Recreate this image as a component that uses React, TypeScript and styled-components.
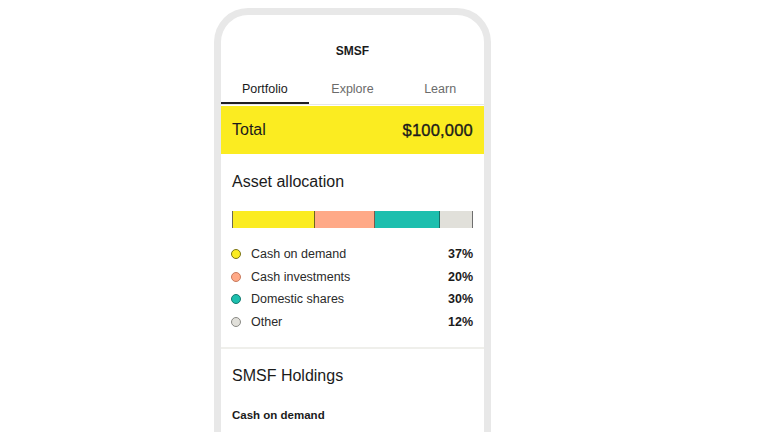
import styled, { createGlobalStyle } from 'styled-components';

const GlobalStyle = createGlobalStyle`
  html, body {
    margin: 0;
    padding: 0;
    background: #ffffff;
    font-family: "Liberation Sans", Arial, sans-serif;
    color: #1b1b1b;
    overflow: hidden;
  }
`;

const Page = styled.div`
  width: 780px;
  height: 432px;
  padding: 8px 0 0 214px;
  box-sizing: border-box;
  overflow: hidden;
`;

const Phone = styled.div`
  width: 277px;
  height: 600px;
  box-sizing: border-box;
  border: 7px solid #e8e8e8;
  border-bottom: none;
  border-radius: 34px 34px 0 0;
  background: #fff;
  display: flex;
  flex-direction: column;
`;

const Header = styled.div`
  height: 60px;
  display: flex;
  align-items: center;
  justify-content: center;
  padding-top: 12px;
  box-sizing: border-box;
  font-size: 12px;
  font-weight: 700;
`;

const Tabs = styled.div`
  display: grid;
  grid-template-columns: repeat(3, 1fr);
  border-bottom: 1px solid #e6e6e6;
`;

const Tab = styled.div<{ $active?: boolean }>`
  height: 29px;
  display: flex;
  align-items: center;
  justify-content: center;
  padding-bottom: 2px;
  box-sizing: border-box;
  font-size: 12.5px;
  color: ${(p) => (p.$active ? '#1b1b1b' : '#6b6b6b')};
  box-shadow: ${(p) => (p.$active ? 'inset 0 -2px 0 #1f1f24' : 'none')};
`;

const TotalBar = styled.div`
  height: 48px;
  background: #fbec21;
  display: flex;
  align-items: center;
  justify-content: space-between;
  padding: 0 11px;
  font-size: 16px;
  margin-top: 1px;
`;

const Amount = styled.span`
  font-size: 16.5px;
  letter-spacing: 0.2px;
  -webkit-text-stroke: 0.35px #1b1b1b;
`;

const Section = styled.div`
  padding: 0 11px;
`;

const Allocation = styled(Section)`
  border-bottom: 2px solid #efefeb;
  padding-bottom: 14px;
`;

const Title = styled.div<{ $top: number }>`
  font-size: 16px;
  padding-top: ${(p) => p.$top}px;
  height: 20px;
  line-height: 20px;
`;

const Bar = styled.div`
  display: flex;
  height: 17px;
  margin-top: 19px;
  border-left: 1px solid #6b6b55;
`;

const Segment = styled.div<{ $color: string; $edge: string }>`
  background: ${(p) => p.$color};
  border-right: 1px solid ${(p) => p.$edge};
`;

const Legend = styled.div`
  margin-top: 15px;
  display: flex;
  flex-direction: column;
`;

const Row = styled.div`
  display: flex;
  align-items: center;
  height: 22.5px;
  font-size: 12.5px;
`;

const Dot = styled.span<{ $color: string; $edge: string }>`
  width: 8px;
  height: 8px;
  border-radius: 50%;
  background: ${(p) => p.$color};
  border: 1px solid ${(p) => p.$edge};
  margin-right: 10px;
  margin-left: -1px;
`;

const Label = styled.span`
  flex: 1;
  color: #2a2a2a;
`;

const Pct = styled.span`
  font-weight: 700;
  font-size: 12.5px;
`;

const Sub = styled.div`
  font-size: 11.5px;
  font-weight: 700;
  margin-top: 23px;
`;

const assets = [
  { name: 'Cash on demand', pct: 37, width: 82, color: '#fbec21', edge: '#6b6520', dot: '#7a7418' },
  { name: 'Cash investments', pct: 20, width: 60, color: '#ffa987', edge: '#7a5a4a', dot: '#c87a5e' },
  { name: 'Domestic shares', pct: 30, width: 65, color: '#1dbfae', edge: '#1a6e66', dot: '#167a70' },
  { name: 'Other', pct: 12, width: 33, color: '#e1e0da', edge: '#6e6e6e', dot: '#8a8a86' },
];

export default function App() {
  return (
    <>
      <GlobalStyle />
      <Page>
        <Phone>
          <Header>SMSF</Header>
          <Tabs>
            <Tab $active>Portfolio</Tab>
            <Tab>Explore</Tab>
            <Tab>Learn</Tab>
          </Tabs>
          <TotalBar>
            <span>Total</span>
            <Amount>$100,000</Amount>
          </TotalBar>
          <Allocation>
            <Title $top={18}>Asset allocation</Title>
            <Bar>
              {assets.map((a) => (
                <Segment key={a.name} $color={a.color} $edge={a.edge} style={{ width: a.width }} />
              ))}
            </Bar>
            <Legend>
              {assets.map((a) => (
                <Row key={a.name}>
                  <Dot $color={a.color} $edge={a.dot} />
                  <Label>{a.name}</Label>
                  <Pct>{a.pct}%</Pct>
                </Row>
              ))}
            </Legend>
          </Allocation>
          <Section>
            <Title $top={17}>SMSF Holdings</Title>
            <Sub>Cash on demand</Sub>
          </Section>
        </Phone>
      </Page>
    </>
  );
}
